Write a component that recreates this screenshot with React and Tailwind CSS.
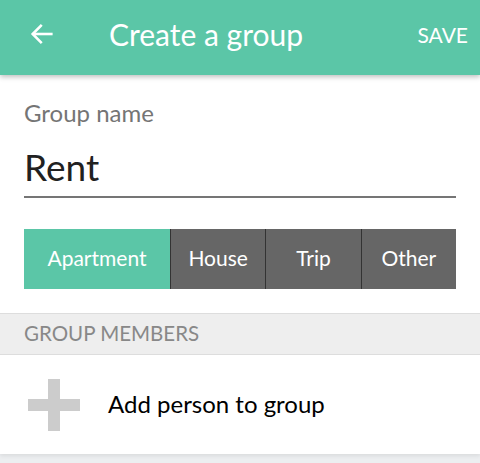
export default function App() {
  const types = ['Apartment', 'House', 'Trip', 'Other'];
  const active = 'Apartment';

  return (
    <div className="w-[480px] h-[463px] overflow-hidden bg-[#eceef0] font-['Lato','Noto_Sans',sans-serif]">
      {/* Top bar */}
      <div className="relative z-10 h-[75px] bg-[#5bc6a7] flex items-center text-white shadow-[0_2px_5px_rgba(0,0,0,0.25)]">
        <button className="w-[84px] h-full flex items-center pl-[28px] pb-[8px]">
          <svg width="28" height="28" viewBox="0 0 24 24" fill="none" stroke="white" strokeWidth="2.2" strokeLinecap="square">
            <path d="M20 12H5" />
            <path d="M11 5l-7 7 7 7" />
          </svg>
        </button>
        <div className="flex-1 pl-[25px] text-[30px] leading-none pb-[8px]">Create a group</div>
        <button className="pr-[12px] text-[21px] leading-none pb-[7px]">SAVE</button>
      </div>

      <div className="bg-white shadow-[0_2px_4px_rgba(0,0,0,0.08)]">
        {/* Group name */}
        <div className="px-[24px] pt-[26px]">
          <div className="text-[24px] leading-none text-[#757575]">Group name</div>
          <div className="mt-[23px] border-b-2 border-[#757575] pb-[11px] text-[37px] leading-none text-[#212121]">
            Rent
          </div>
        </div>

        {/* Type selector */}
        <div className="px-[24px] pt-[31px] pb-[24px]">
          <div className="flex h-[60px]">
            {types.map((t) => (
              <div
                key={t}
                className={
                  t === active
                    ? 'w-[146px] flex items-center justify-center bg-[#5bc6a7] text-white text-[21px] pb-[2px]'
                    : 'flex-1 flex items-center justify-center bg-[#666666] text-white text-[21px] pb-[2px] border-l border-[#333333]'
                }
              >
                {t}
              </div>
            ))}
          </div>
        </div>

        {/* Section header */}
        <div className="h-[42px] bg-[#eeeeee] border-y border-[#dddddd] flex items-center px-[24px] text-[20.5px] text-[#888888] pb-[1px]">
          GROUP MEMBERS
        </div>

        {/* Add person */}
        <div className="h-[99px] flex items-center">
          <div className="w-[108px] flex items-center pl-[28px]">
            <svg width="52" height="52" viewBox="0 0 52 52">
              <rect x="20" y="0" width="12" height="52" fill="#cccccc" />
              <rect x="0" y="20" width="52" height="12" fill="#cccccc" />
            </svg>
          </div>
          <div className="text-[24px] text-black pb-[2px]">Add person to group</div>
        </div>
      </div>
    </div>
  );
}
